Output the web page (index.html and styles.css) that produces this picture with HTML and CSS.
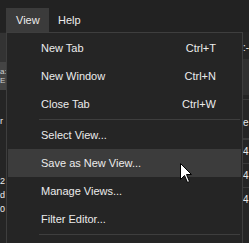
FILE: index.html
```html
<!DOCTYPE html>
<html>
<head>
<meta charset="utf-8">
<link rel="stylesheet" href="styles.css">
</head>
<body>
<div class="app">
  <div class="menubar">
    <div class="mb-item active">View</div>
    <div class="mb-item">Help</div>
  </div>
  <div class="content">
    <div class="pane-left">
      <div class="lp-head"></div>
      <div class="lp-sel"><span>a:</span><span>E</span></div>
      <div class="lp-row r1">r</div>
      <div class="lp-row r2">2</div>
      <div class="lp-row r3">d</div>
      <div class="lp-row r4">0</div>
    </div>
    <div class="pane-mid"></div>
    <div class="pane-right">
      <div class="rp-row a">:-</div>
      <div class="rp-block"></div>
      <div class="rp-line"></div>
      <div class="rp-row b">e</div>
      <div class="rp-line"></div>
      <div class="rp-num">4</div>
      <div class="rp-num">4</div>
      <div class="rp-num">4</div>
    </div>
  </div>
</div>

<div class="dropdown">
  <div class="item"><span class="label">New Tab</span><span class="sc">Ctrl+T</span></div>
  <div class="item"><span class="label">New Window</span><span class="sc">Ctrl+N</span></div>
  <div class="item"><span class="label">Close Tab</span><span class="sc">Ctrl+W</span></div>
  <div class="sep"></div>
  <div class="item"><span class="label">Select View...</span></div>
  <div class="item hover"><span class="label">Save as New View...</span></div>
  <div class="item"><span class="label">Manage Views...</span></div>
  <div class="item"><span class="label">Filter Editor...</span></div>
  <div class="sep"></div>
  <div class="tail"></div>
</div>

<svg class="cursor" width="13" height="20" viewBox="0 0 13 20">
  <path d="M0.5 0.5 L0.5 16.5 L4.5 12.5 L7.5 19.5 L9.5 18.5 L6.5 11.5 L11.5 11.5 Z" fill="#fff" stroke="#000" stroke-width="1"/>
</svg>
</body>
</html>
```

FILE: styles.css
```css
html, body {
  margin: 0;
  padding: 0;
  width: 249px;
  height: 243px;
  overflow: hidden;
  background: #222222;
  font-family: "Liberation Sans", Arial, sans-serif;
  font-size: 11px;
  color: #e4e4e4;
}

.app {
  display: flex;
  flex-direction: column;
  height: 243px;
}

.menubar {
  display: flex;
  padding: 8px 0 0 6px;
  height: 24px;
  background: #222222;
}

.mb-item {
  height: 24px;
  line-height: 24px;
  padding: 0 10px 0 10px;
  color: #ececec;
}

.mb-item.active {
  background: #3b3b3b;
  width: 23px;
}

.mb-item + .mb-item {
  padding-left: 9px;
}

.content {
  flex: 1;
  display: flex;
  background: #252525;
}

.pane-left {
  width: 6px;
  overflow: hidden;
  display: flex;
  flex-direction: column;
  font-size: 9px;
  white-space: nowrap;
}

.lp-head {
  height: 29px;
  margin-top: 1px;
  background: #333333;
}

.lp-sel {
  height: 28px;
  background: #444444;
  display: flex;
  flex-direction: column;
  justify-content: center;
  line-height: 9px;
  color: #cfcfcf;
  font-size: 8px;
}

.lp-row {
  height: 14px;
  line-height: 14px;
  color: #ededed;
}

.lp-row.r1 { margin-top: 24px; }
.lp-row.r2 { margin-top: 46px; }

.pane-mid {
  flex: 1;
}

.pane-right {
  width: 6px;
  overflow: hidden;
  display: flex;
  flex-direction: column;
  border-left: 1px solid #3a3a3a;
  font-size: 10px;
  white-space: nowrap;
  color: #e8e8e8;
}

.rp-row.a {
  height: 22px;
  line-height: 22px;
  margin-top: 5px;
}

.rp-block {
  height: 36px;
  background: #303030;
}

.rp-line {
  height: 1px;
  background: #3a3a3a;
  margin-top: 4px;
}

.rp-row.b {
  height: 22px;
  line-height: 22px;
  margin-top: 12px;
}

.rp-num {
  height: 23px;
  line-height: 23px;
  border-top: 1px solid #3a3a3a;
}

.dropdown {
  position: absolute;
  left: 6px;
  top: 32px;
  width: 235px;
  padding-top: 1px;
  background: #252525;
  border: 1px solid #3e3e3e;
  display: flex;
  flex-direction: column;
}

.item {
  height: 28px;
  margin: 0 1px;
  padding: 0 25px 0 33px;
  display: flex;
  align-items: center;
  justify-content: space-between;
  color: #ececec;
  white-space: nowrap;
}

.item.hover {
  background: #3c3c3c;
}

.sep {
  height: 1px;
  margin: 1px 2px 1px 32px;
  background: #3e3e3e;
}

.tail {
  height: 20px;
}

.cursor {
  position: absolute;
  left: 180px;
  top: 163px;
}
```
